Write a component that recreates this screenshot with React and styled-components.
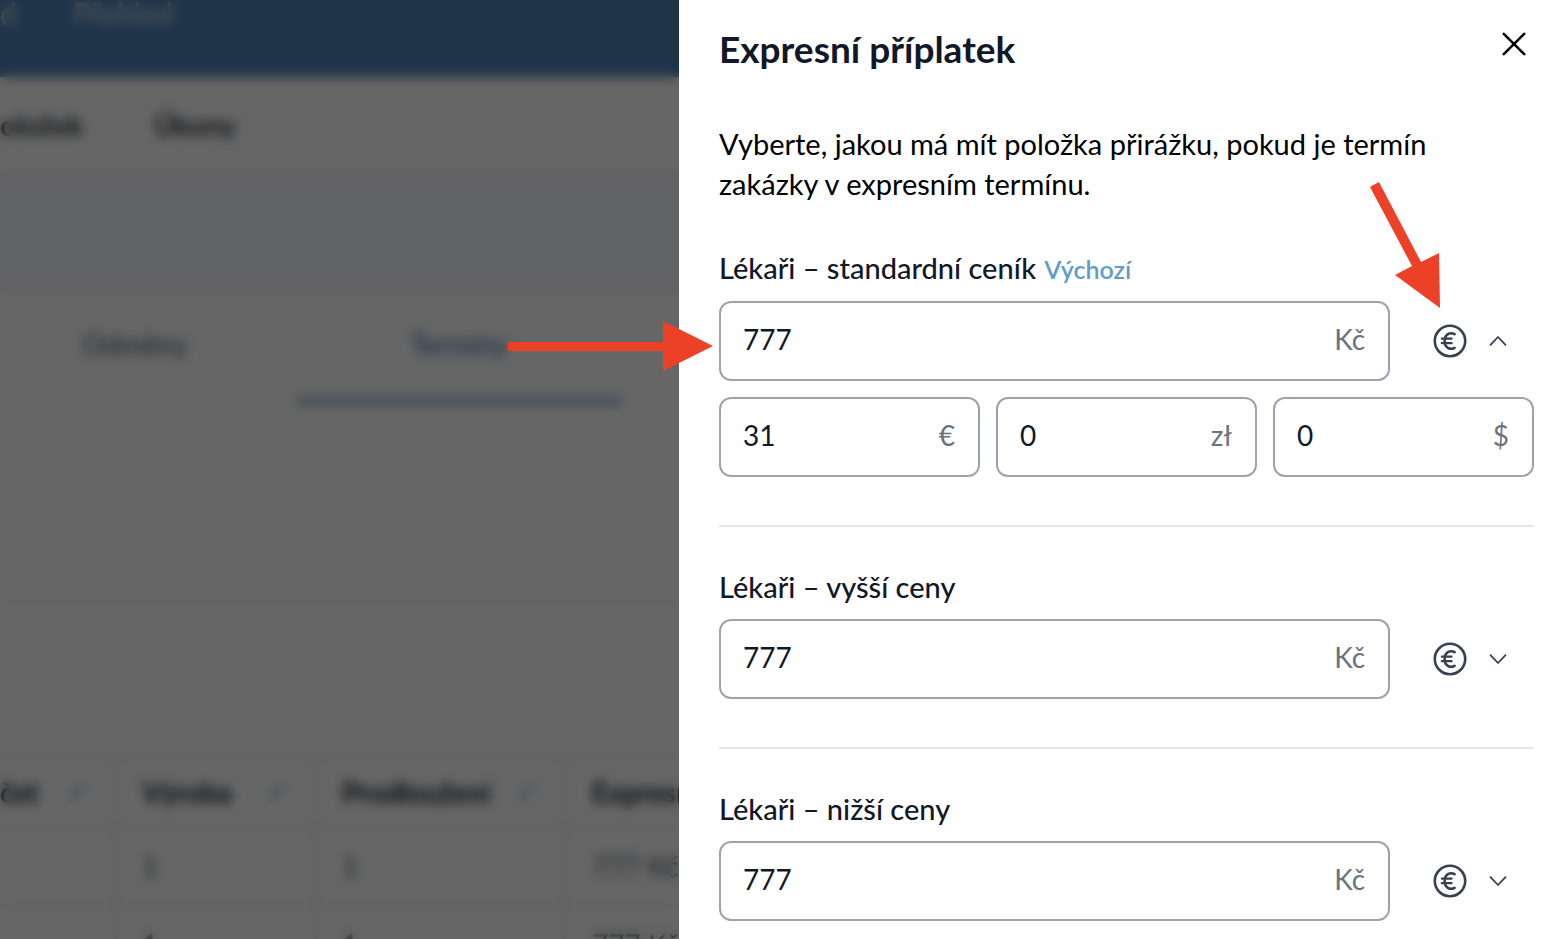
import React, { useState } from "react";
import styled, { createGlobalStyle } from "styled-components";

const GlobalStyle = createGlobalStyle`
  *, *::before, *::after { box-sizing: border-box; }
  body {
    margin: 0;
    background: #fff;
    color: #111827;
    font-family: Lato, "Noto Sans", sans-serif;
    font-size: 28px;
    line-height: 40px;
  }
  button, input { font: inherit; color: inherit; }
`;

const Page = styled.div`
  position: relative;
  display: grid;
  grid-template-columns: minmax(0, 7fr) minmax(0, 9fr);
  height: 100vh;
  overflow: hidden;
`;

const Backdrop = styled.div`
  position: absolute;
  inset: 0;
  background: rgba(0, 0, 0, 0.6);
  backdrop-filter: blur(6px);
`;

const Workspace = styled.div`
  position: relative;
  overflow: hidden;
  white-space: nowrap;
`;

const TopBar = styled.header`
  display: flex;
  gap: 56px;
  height: 77px;
  padding-bottom: 44px;
  align-items: flex-end;
  background: #4e82b4;
  color: #d5e2ee;
  font-size: 30px;
`;

const SubNav = styled.nav`
  display: flex;
  align-items: center;
  gap: 70px;
  height: 95px;
  font-size: 29px;
  font-weight: 600;
`;

const PlainLink = styled.a`
  color: inherit;
  text-decoration: none;
`;

const Band = styled.div`
  height: 120px;
  background: #f3f4f9;
`;

const Tabs = styled.nav`
  display: flex;
  height: 112px;
`;

const Tab = styled.a`
  flex: 0 0 ${(p) => (p.$active ? "324px" : "297px")};
  padding-top: 32px;
  padding-right: ${(p) => (p.$active ? "0" : "27px")};
  border-bottom: ${(p) => (p.$active ? "6px solid #7da5cb" : "0")};
  text-align: center;
  text-decoration: none;
  color: ${(p) => (p.$active ? "#2f6f9f" : "#4b5563")};
`;

const Panel = styled.div`
  height: 198px;
  border-bottom: 2px solid #f0f1f3;
`;

const DataTable = styled.table`
  width: 820px;
  margin-top: 154px;
  table-layout: fixed;
  border-collapse: collapse;
  text-align: left;
  th, td {
    height: 78px;
    padding: 0 26px;
    border: 2px solid #eceef1;
    overflow: hidden;
  }
  th { height: 70px; font-weight: 700; }
  th:first-child, td:first-child { padding-left: 0; border-left: 0; }
  td { color: #4b5563; }
`;

const HeadCell = styled.span`
  display: flex;
  align-items: center;
  justify-content: space-between;
`;

const Drawer = styled.aside`
  position: relative;
  padding: 24px 18px 16px 40px;
  background: #fff;
`;

const DrawerHeader = styled.div`
  display: flex;
  justify-content: space-between;
  align-items: flex-start;
  margin-bottom: 50px;
`;

const Title = styled.h2`
  margin: 0;
  font-size: 37px;
  line-height: 50px;
  font-weight: 700;
`;

const IconButton = styled.button`
  display: flex;
  align-items: center;
  justify-content: center;
  gap: 22px;
  height: 40px;
  min-width: 40px;
  padding: 0;
  border: 0;
  background: none;
  color: ${(p) => (p.$dark ? "#000" : "#374151")};
  cursor: pointer;
`;

const Intro = styled.p`
  margin: 0 0 44px;
  padding-right: 60px;
  font-size: 29px;
  color: #000;
`;

const PriceList = styled.section`
  padding-bottom: 48px;
  & + & {
    padding-top: 40px;
    border-top: 2px solid #e5e7eb;
  }
`;

const LabelRow = styled.div`
  display: flex;
  align-items: baseline;
  gap: 8px;
  margin-bottom: 12px;
`;

const Label = styled.label`
  font-size: 29px;
  font-weight: 500;
`;

const DefaultTag = styled.span`
  font-size: 25px;
  font-weight: 600;
  color: #5f9bcb;
`;

const MainRow = styled.div`
  display: grid;
  grid-template-columns: minmax(0, 1fr) 144px;
  align-items: center;
`;

const ToggleSlot = styled.div`
  display: flex;
  justify-content: flex-end;
  padding-right: 27px;
`;

const CurrencyRow = styled.div`
  display: grid;
  grid-template-columns: repeat(3, minmax(0, 1fr));
  gap: 16px;
  margin-top: 16px;
`;

const Field = styled.div`
  display: flex;
  align-items: center;
  height: 80px;
  padding: 0 23px 4px 22px;
  border: 2px solid #9ca3af;
  border-radius: 12px;
`;

const Amount = styled.input`
  flex: 1;
  min-width: 0;
  padding: 0;
  border: 0;
  outline: 0;
  background: none;
`;

const Unit = styled.span`
  color: #6b7280;
`;

const Arrow = styled.svg`
  position: absolute;
  top: ${(p) => p.$top}px;
  left: ${(p) => p.$left};
  right: ${(p) => p.$right};
  fill: #ec4127;
  pointer-events: none;
`;

const EuroIcon = () => (
  <svg width="34" height="34" viewBox="0 0 34 34" fill="none" stroke="currentColor" strokeLinecap="round" aria-hidden="true">
    <circle cx="17" cy="17" r="15.2" strokeWidth="2.6" />
    <path d="M21.6 10.2C17 7.6 11.6 10.5 11.6 17S17 26.4 21.6 23.8" strokeWidth="2.6" />
    <path d="M8.8 14.6H18.6M8.8 19.2H18.6" strokeWidth="2.2" />
  </svg>
);

const Chevron = ({ open }) => (
  <svg width="18" height="18" viewBox="0 0 18 18" fill="none" stroke="currentColor" strokeWidth="1.8" strokeLinecap="round" strokeLinejoin="round" aria-hidden="true">
    <path d={open ? "M1.5 12.8L9 5L16.5 12.8" : "M1.5 5.2L9 13L16.5 5.2"} />
  </svg>
);

const CloseIcon = () => (
  <svg width="24" height="24" viewBox="0 0 24 24" fill="none" stroke="currentColor" strokeWidth="2.6" strokeLinecap="round" aria-hidden="true">
    <path d="M1.8 1.8L22.2 22.2M22.2 1.8L1.8 22.2" />
  </svg>
);

const PencilIcon = () => (
  <svg width="22" height="22" viewBox="0 0 22 22" stroke="#6fa3cc" strokeWidth="3" aria-hidden="true">
    <path d="M3 19L18 4" />
  </svg>
);

function MoneyField({ id, label, value, unit }) {
  return (
    <Field>
      <Amount id={id} aria-label={label} defaultValue={value} inputMode="decimal" />
      <Unit>{unit}</Unit>
    </Field>
  );
}

function PriceListItem({ id, name, isDefault, initiallyOpen }) {
  const [open, setOpen] = useState(Boolean(initiallyOpen));
  return (
    <PriceList>
      <LabelRow>
        <Label htmlFor={id}>{name}</Label>
        {isDefault && <DefaultTag>Výchozí</DefaultTag>}
      </LabelRow>
      <MainRow>
        <MoneyField id={id} value="777" unit="Kč" />
        <ToggleSlot>
          <IconButton type="button" aria-expanded={open} aria-label="Další měny" onClick={() => setOpen(!open)}>
            <EuroIcon />
            <Chevron open={open} />
          </IconButton>
        </ToggleSlot>
      </MainRow>
      {open && (
        <CurrencyRow>
          <MoneyField id={`${id}-eur`} label="EUR" value="31" unit="€" />
          <MoneyField id={`${id}-pln`} label="PLN" value="0" unit="zł" />
          <MoneyField id={`${id}-usd`} label="USD" value="0" unit="$" />
        </CurrencyRow>
      )}
    </PriceList>
  );
}

const Column = styled.col`
  width: ${(p) => p.$width};
`;

function BackgroundTable() {
  return (
    <DataTable>
      <colgroup>
        <Column $width="115px" />
        <Column $width="200px" />
        <Column $width="250px" />
        <Column $width="auto" />
      </colgroup>
      <thead>
        <tr>
          {["čet", "Výroba", "Prodloužení", "Expresní"].map((name) => (
            <th key={name}><HeadCell>{name}<PencilIcon /></HeadCell></th>
          ))}
        </tr>
      </thead>
      <tbody>
        {[1, 2].map((row) => (
          <tr key={row}><td /><td>1</td><td>1</td><td>777 Kč</td></tr>
        ))}
      </tbody>
    </DataTable>
  );
}

export default function App() {
  return (
    <Page>
      <GlobalStyle />
      <Workspace>
        <TopBar>
          <PlainLink href="#">d</PlainLink>
          <PlainLink href="#">Přehled</PlainLink>
        </TopBar>
        <SubNav>
          <PlainLink href="#">oložek</PlainLink>
          <PlainLink href="#">Úkony</PlainLink>
        </SubNav>
        <Band />
        <Tabs>
          <Tab href="#">Odměny</Tab>
          <Tab href="#" $active>Termíny</Tab>
        </Tabs>
        <Panel />
        <BackgroundTable />
        <Backdrop />
      </Workspace>
      <Drawer>
        <DrawerHeader>
          <Title>Expresní příplatek</Title>
          <IconButton type="button" aria-label="Zavřít" $dark><CloseIcon /></IconButton>
        </DrawerHeader>
        <Intro>Vyberte, jakou má mít položka přirážku, pokud je termín zakázky v expresním termínu.</Intro>
        <PriceListItem id="standard" name="Lékaři – standardní ceník" isDefault initiallyOpen />
        <PriceListItem id="higher" name="Lékaři – vyšší ceny" />
        <PriceListItem id="lower" name="Lékaři – nižší ceny" />
        <Arrow $top={321} $left="-171px" width="206" height="50" viewBox="0 0 206 50" aria-hidden="true">
          <path d="M0 21H155V0L205 25L155 50V30H0Z" />
        </Arrow>
        <Arrow $top={182} $right="110px" width="72" height="128" viewBox="0 0 72 128" aria-hidden="true">
          <path d="M0 5L9 0L51 80L69 71L70 126L25 93L42 84Z" />
        </Arrow>
      </Drawer>
    </Page>
  );
}
